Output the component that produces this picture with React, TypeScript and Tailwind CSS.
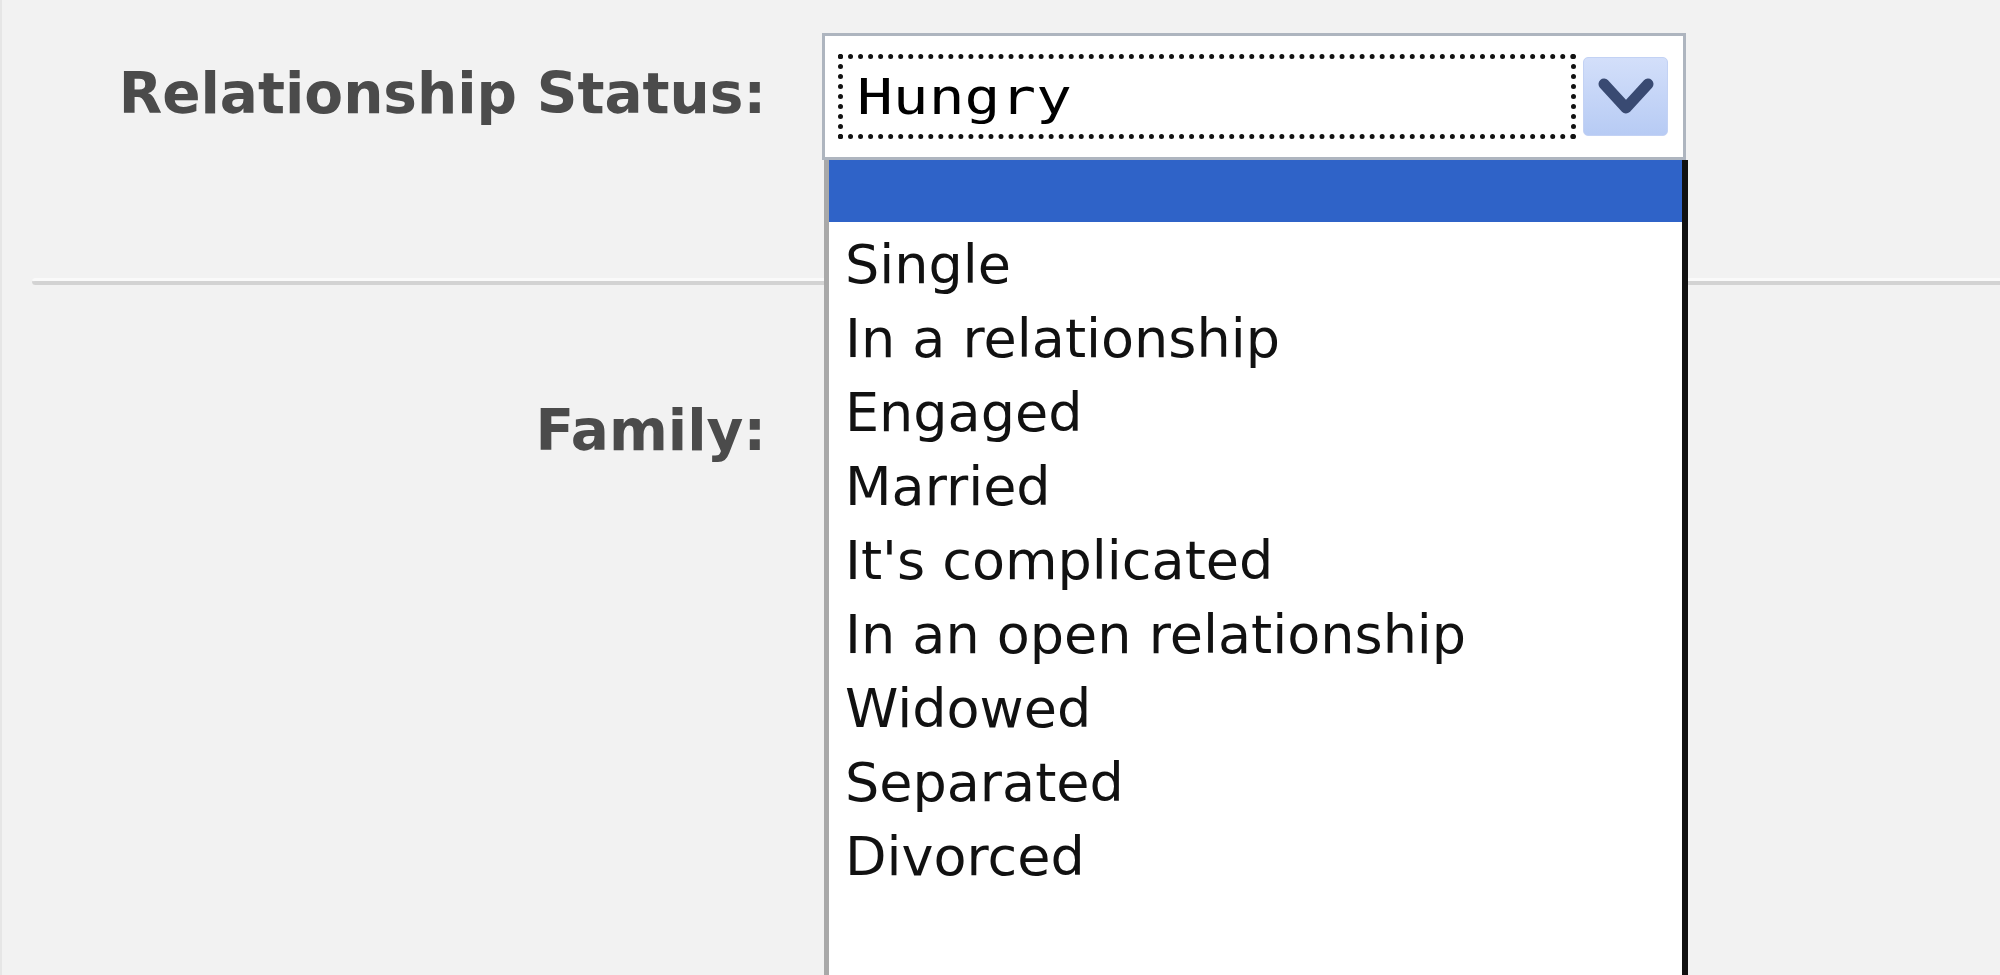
import React from 'react';

const statuses = [
  'Single',
  'In a relationship',
  'Engaged',
  'Married',
  "It's complicated",
  'In an open relationship',
  'Widowed',
  'Separated',
  'Divorced',
  '',
  '',
];

function Chevron() {
  return (
    <svg width="56" height="38" viewBox="0 0 56 38" fill="none">
      <polyline
        points="6,6 28,30 50,6"
        stroke="#394a72"
        strokeWidth="11"
        strokeLinecap="round"
        strokeLinejoin="round"
      />
    </svg>
  );
}

function StatusSelect() {
  return (
    <div className="relative w-[864px] h-[127px]">
      <div className="flex items-center h-full bg-white border-[3px] border-[#aeb5bf] pl-[13px] pr-[15px] gap-[7px]">
        <div className="flex items-center h-[85px] flex-1 border-[5px] border-dotted border-[#111] pl-[14px]">
          <span className="inline-block origin-left scale-x-[1.19] font-['DejaVu_Sans_Mono',monospace] text-[50px] leading-none text-black">
            Hungry
          </span>
        </div>
        <div className="flex items-center justify-center w-[85px] h-[79px] rounded-[5px] bg-gradient-to-b from-[#d3dffa] to-[#b7cbf4] border border-[#c3d2f4]">
          <Chevron />
        </div>
      </div>

      {/* open options list */}
      <div className="absolute left-[2px] top-[127px] w-[864px] h-[860px] bg-white border-l-[5px] border-[#a9a9a9] border-r-[6px] border-r-[#111]">
        <div className="h-[62px] bg-[#2f63c8]" />
        <ul className="pt-[6px] pl-[16px]">
          {statuses.map((s, i) => (
            <li
              key={i}
              className="h-[74px] leading-[74px] text-[54px] text-[#111] font-['DejaVu_Sans',sans-serif] whitespace-nowrap"
            >
              {s}
            </li>
          ))}
        </ul>
      </div>
    </div>
  );
}

export default function App() {
  return (
    <div className="w-[2000px] h-[975px] overflow-hidden bg-[#f2f2f2] border-l-2 border-[#e6e6e6] font-['DejaVu_Sans',sans-serif]">
      <div className="flex items-start pt-[33px]">
        <div className="w-[764px] mt-[33px] text-right text-[56.5px] leading-none font-bold text-[#4b4b4b] whitespace-nowrap">
          Relationship Status:
        </div>
        <div className="ml-[56px] relative z-10">
          <StatusSelect />
        </div>
      </div>

      <div className="ml-[30px] mt-[118px] h-[7px] border-t-[3px] border-[#fafafa] bg-[#d3d3d3] rounded-l-full" />

      <div className="w-[764px] mt-[118px] text-right text-[56.5px] leading-none font-bold text-[#4b4b4b]">
        Family:
      </div>
    </div>
  );
}
